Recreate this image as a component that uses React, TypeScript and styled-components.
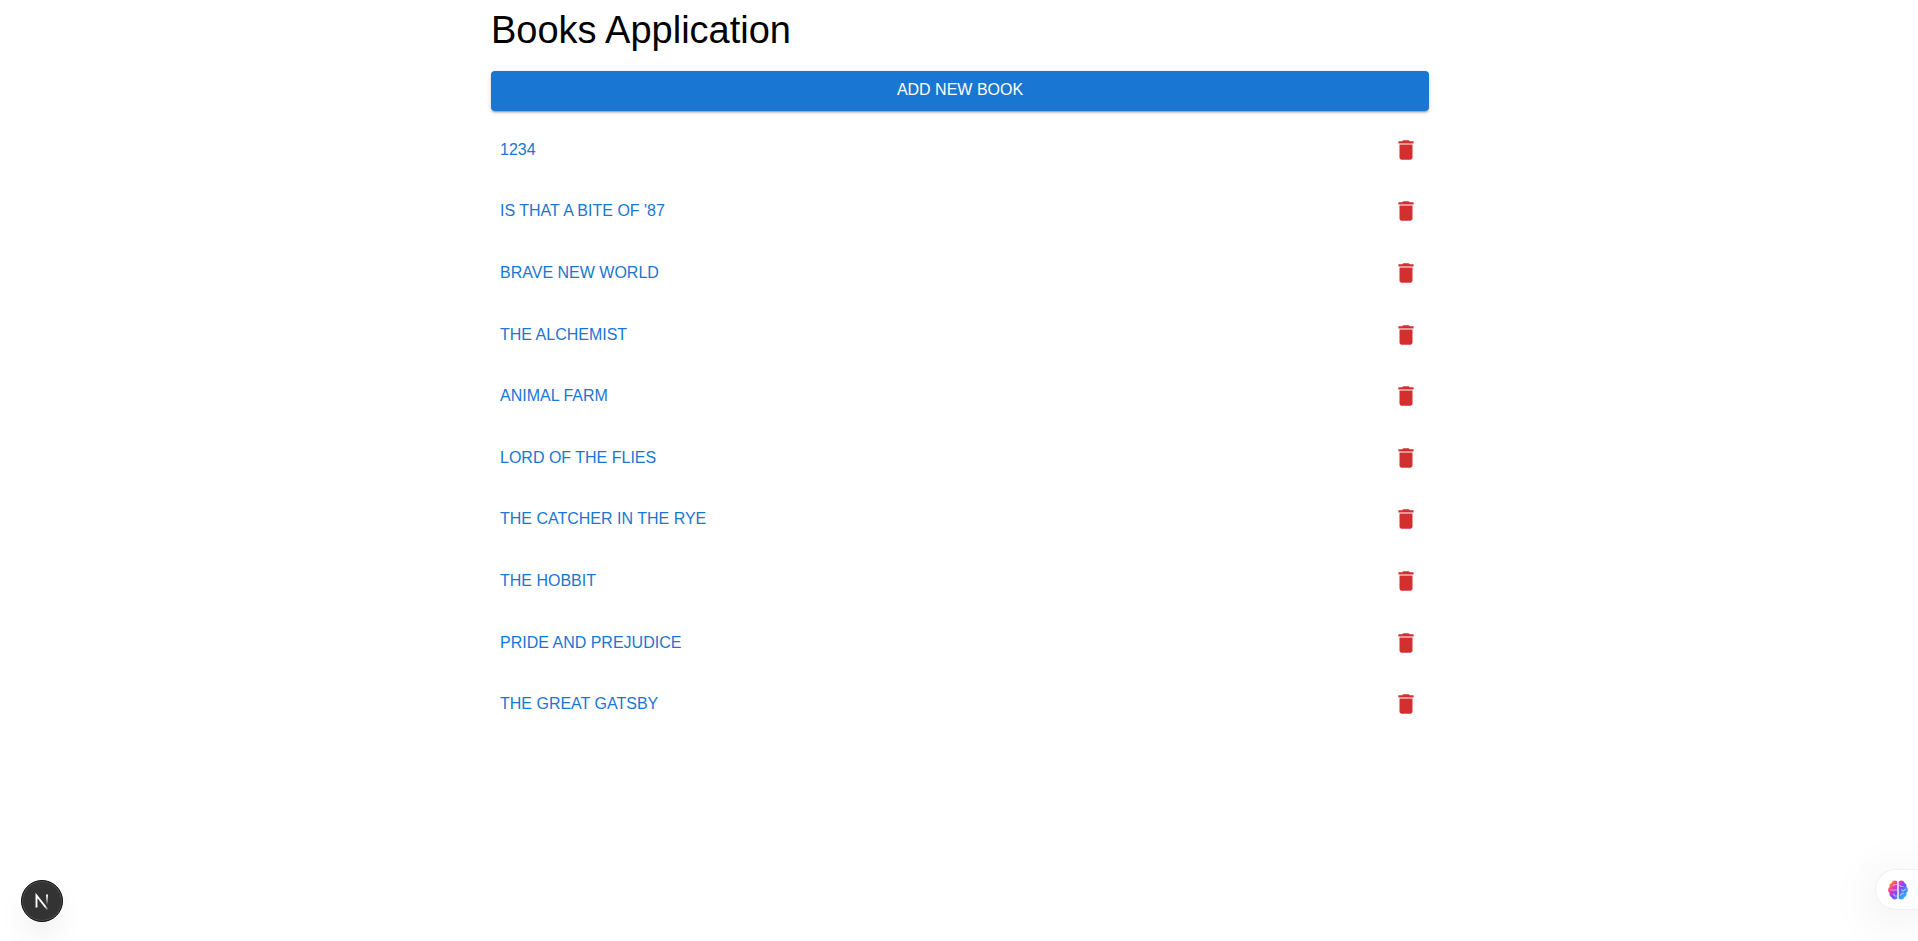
import React, { useState } from "react";
import styled, { createGlobalStyle } from "styled-components";

const GlobalStyle = createGlobalStyle`
  *, *::before, *::after { box-sizing: border-box; }
  body {
    margin: 0;
    background: #fff;
    color: #000;
    font-family: "Liberation Sans", Arial, sans-serif;
  }
`;

const Page = styled.main`
  max-width: 990px;
  margin: 0 auto;
  padding: 8px 25px 0 27px;
`;

const Title = styled.h1`
  margin: 0 0 19px;
  font-size: 38px;
  font-weight: 400;
  line-height: 44px;
`;

const BaseButton = styled.button`
  border: 0;
  border-radius: 4px;
  font-family: inherit;
  font-size: 16px;
  line-height: 26px;
  text-transform: uppercase;
  cursor: pointer;
`;

const AddButton = styled(BaseButton)`
  display: block;
  width: 100%;
  padding: 6px 18px 8px;
  background: #1976d2;
  color: #fff;
  box-shadow:
    0 3px 1px -2px rgba(0, 0, 0, 0.2),
    0 2px 2px 0 rgba(0, 0, 0, 0.14),
    0 1px 5px 0 rgba(0, 0, 0, 0.12);

  &:hover { background: #1565c0; }
`;

const BookList = styled.ul`
  display: grid;
  grid-auto-rows: 1fr;
  min-height: 616px;
  margin: 8px 0 0;
  padding: 0;
  list-style: none;
`;

const BookRow = styled.li`
  display: flex;
  align-items: center;
  justify-content: space-between;
`;

const BookButton = styled(BaseButton)`
  padding: 7px 9px;
  background: transparent;
  color: #1976d2;

  &:hover { background: rgba(25, 118, 210, 0.04); }
`;

const DeleteButton = styled.button`
  display: flex;
  padding: 10px;
  border: 0;
  border-radius: 50%;
  background: transparent;
  color: #d32f2f;
  cursor: pointer;

  &:hover { background: rgba(211, 47, 47, 0.04); }
`;

const DevBadge = styled.button`
  position: fixed;
  left: 21px;
  bottom: 19px;
  display: flex;
  align-items: center;
  justify-content: center;
  width: 42px;
  height: 42px;
  padding: 0;
  border: 1px solid #0d0d0d;
  border-radius: 50%;
  background: #333;
  box-shadow:
    inset 0 0 0 1px #4f4f4f,
    0 16px 32px -8px rgba(0, 0, 0, 0.14);
  cursor: pointer;
`;

const AssistantTab = styled.button`
  position: fixed;
  right: 0;
  bottom: 31px;
  display: flex;
  align-items: center;
  width: 43px;
  height: 41px;
  padding: 0 0 0 11px;
  border: 1px solid #f0f0f0;
  border-right: 0;
  border-radius: 21px 0 0 21px;
  background: #fff;
  box-shadow: 0 8px 50px rgba(0, 0, 0, 0.1);
  cursor: pointer;
`;

const TrashIcon = () => (
  <svg width="26" height="26" viewBox="0 0 24 24" fill="currentColor" aria-hidden="true">
    <path d="M6 19c0 1.1.9 2 2 2h8c1.1 0 2-.9 2-2V7H6zM19 4h-3.5l-1-1h-5l-1 1H5v2h14z" />
  </svg>
);

const NextIcon = () => (
  <svg width="40" height="40" viewBox="0 0 40 40" fill="none" aria-hidden="true">
    <defs>
      <linearGradient id="diagonal" x1="18" y1="18" x2="27" y2="29" gradientUnits="userSpaceOnUse">
        <stop stopColor="#fff" />
        <stop offset="0.6" stopColor="#fff" />
        <stop offset="1" stopColor="#fff" stopOpacity="0" />
      </linearGradient>
      <linearGradient id="stem" x1="25" y1="14" x2="25" y2="24" gradientUnits="userSpaceOnUse">
        <stop stopColor="#fff" />
        <stop offset="1" stopColor="#fff" stopOpacity="0" />
      </linearGradient>
    </defs>
    <path d="M14.5 26.500V14.500L25.500 28.500" stroke="url(#diagonal)" strokeWidth="1.9" />
    <path d="M25 13.500v11" stroke="url(#stem)" strokeWidth="1.9" />
  </svg>
);

const BrainIcon = () => (
  <svg width="22" height="22" viewBox="0 0 22 22" fill="none" aria-hidden="true">
    <defs>
      <linearGradient id="brain" x1="4" y1="4" x2="18" y2="17" gradientUnits="userSpaceOnUse">
        <stop stopColor="#ff8a1f" />
        <stop offset="0.25" stopColor="#f431b4" />
        <stop offset="0.55" stopColor="#7b4df0" />
        <stop offset="1" stopColor="#22b4ff" />
      </linearGradient>
    </defs>
    <path
      fill="url(#brain)"
      d="M10.300 2.500C8 .8 5 1.500 4.500 4 2.500 4.500 2 6.500 2.600 8 .600 9.500.600 12.500 2.600 14c-.5 2 .4 3.700 2 4.200C5.500 20.800 8.500 21 10.300 19.500zM11.700 2.500c2.300-1.700 5.300-1 5.800 1.500 2 .5 2.500 2.500 1.900 4 2 1.500 2 4.500 0 6 .5 2-.4 3.700-2 4.200-.9 2.600-3.900 2.800-5.700 1.300z"
    />
    <path
      stroke="#fff"
      strokeOpacity="0.5"
      strokeWidth="1.100"
      d="M10 5.500H7.500L6 7M3.500 11h6.500M10 17H8l-2-2M12.500 6l1.500 1.500h2.500M14 10.500l2 1.500 3-2M13 16.500l2-2h2"
    />
  </svg>
);

const initialBooks = [
  "1234",
  "Is that a bite of '87",
  "Brave New World",
  "The Alchemist",
  "Animal Farm",
  "Lord of the Flies",
  "The Catcher in the Rye",
  "The Hobbit",
  "Pride and Prejudice",
  "The Great Gatsby",
];

export default function App() {
  const [books, setBooks] = useState(initialBooks);

  return (
    <>
      <GlobalStyle />
      <Page>
        <Title>Books Application</Title>
        <AddButton type="button">Add new book</AddButton>
        <BookList>
          {books.map((book) => (
            <BookRow key={book}>
              <BookButton type="button">{book}</BookButton>
              <DeleteButton
                type="button"
                aria-label={`Delete ${book}`}
                onClick={() => setBooks(books.filter((item) => item !== book))}
              >
                <TrashIcon />
              </DeleteButton>
            </BookRow>
          ))}
        </BookList>
      </Page>
      <DevBadge type="button" aria-label="Open Next.js Dev Tools">
        <NextIcon />
      </DevBadge>
      <AssistantTab type="button" aria-label="Open assistant">
        <BrainIcon />
      </AssistantTab>
    </>
  );
}
